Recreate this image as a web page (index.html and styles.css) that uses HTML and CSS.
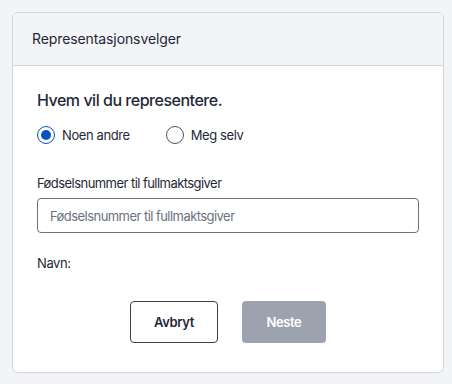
FILE: index.html
```html
<!DOCTYPE html>
<html lang="no">
<head>
<meta charset="utf-8">
<link rel="stylesheet" href="styles.css">
</head>
<body>
<div class="card">
  <div class="card-header">Representasjonsvelger</div>
  <div class="card-body">
    <h2 class="question">Hvem vil du representere.</h2>
    <div class="radios">
      <label class="radio">
        <span class="circle checked"><span class="dot"></span></span>
        <span class="radio-label">Noen andre</span>
      </label>
      <label class="radio">
        <span class="circle"></span>
        <span class="radio-label">Meg selv</span>
      </label>
    </div>
    <div class="field-label">Fødselsnummer til fullmaktsgiver</div>
    <div class="input"><span class="placeholder">Fødselsnummer til fullmaktsgiver</span></div>
    <div class="name">Navn:</div>
    <div class="actions">
      <button class="btn btn-outline">Avbryt</button>
      <button class="btn btn-disabled">Neste</button>
    </div>
  </div>
</div>
</body>
</html>
```
FILE: styles.css
```css
* { box-sizing: border-box; }
html, body { margin: 0; }
body {
  background: #f3f4f6;
  padding: 12px 8px 10px 12px;
  font-family: Inter, "Noto Sans", sans-serif;
  color: #1f2937;
}
.card {
  background: #fff;
  border: 1px solid #d1d5db;
  border-radius: 6px;
  overflow: hidden;
}
.card-header {
  background: #f3f4f6;
  border-bottom: 1px solid #d1d5db;
  padding: 16px 19px;
  font-size: 14px;
  letter-spacing: -0.1px;
  line-height: 20px;
  color: #1f2937;
}
.card-body {
  padding: 22px 24px 29px 24px;
}
.question {
  margin: 0;
  font-size: 16px;
  letter-spacing: -0.48px;
  line-height: 24px;
  font-weight: 500;
  color: #1f2937;
}
.radios {
  display: flex;
  gap: 36px;
  margin-top: 13px;
  height: 20px;
  align-items: center;
}
.radio {
  display: flex;
  align-items: center;
  gap: 7px;
  font-size: 13px;
  letter-spacing: -0.4px;
  line-height: 20px;
  color: #1f2937;
}
.circle {
  width: 18px;
  height: 18px;
  border-radius: 50%;
  border: 1px solid #52525b;
  display: flex;
  align-items: center;
  justify-content: center;
}
.circle.checked {
  border: 1.5px solid #0b4fc4;
}
.dot {
  width: 10px;
  height: 10px;
  border-radius: 50%;
  background: #0b4fc4;
}
.field-label {
  margin-top: 29px;
  font-size: 13px;
  letter-spacing: -0.55px;
  line-height: 18px;
  color: #1f2937;
}
.input {
  margin-top: 6px;
  height: 35px;
  border: 1px solid #6b7280;
  border-radius: 4px;
  padding: 0 12px;
  display: flex;
  align-items: center;
}
.placeholder {
  font-size: 13px;
  letter-spacing: -0.55px;
  color: #6b7280;
}
.name {
  margin-top: 21px;
  font-size: 13px;
  letter-spacing: -0.4px;
  line-height: 18px;
  color: #1f2937;
}
.actions {
  margin-top: 29px;
  display: flex;
  justify-content: center;
  gap: 24px;
}
.btn {
  height: 42px;
  border-radius: 4px;
  font-family: inherit;
  font-size: 13px;
  letter-spacing: -0.4px;
  font-weight: 600;
}
.btn-outline {
  width: 88px;
  background: #fff;
  border: 1px solid #374151;
  color: #1f2937;
}
.btn-disabled {
  width: 84px;
  background: #9ca3af;
  border: none;
  color: #fff;
}
```
